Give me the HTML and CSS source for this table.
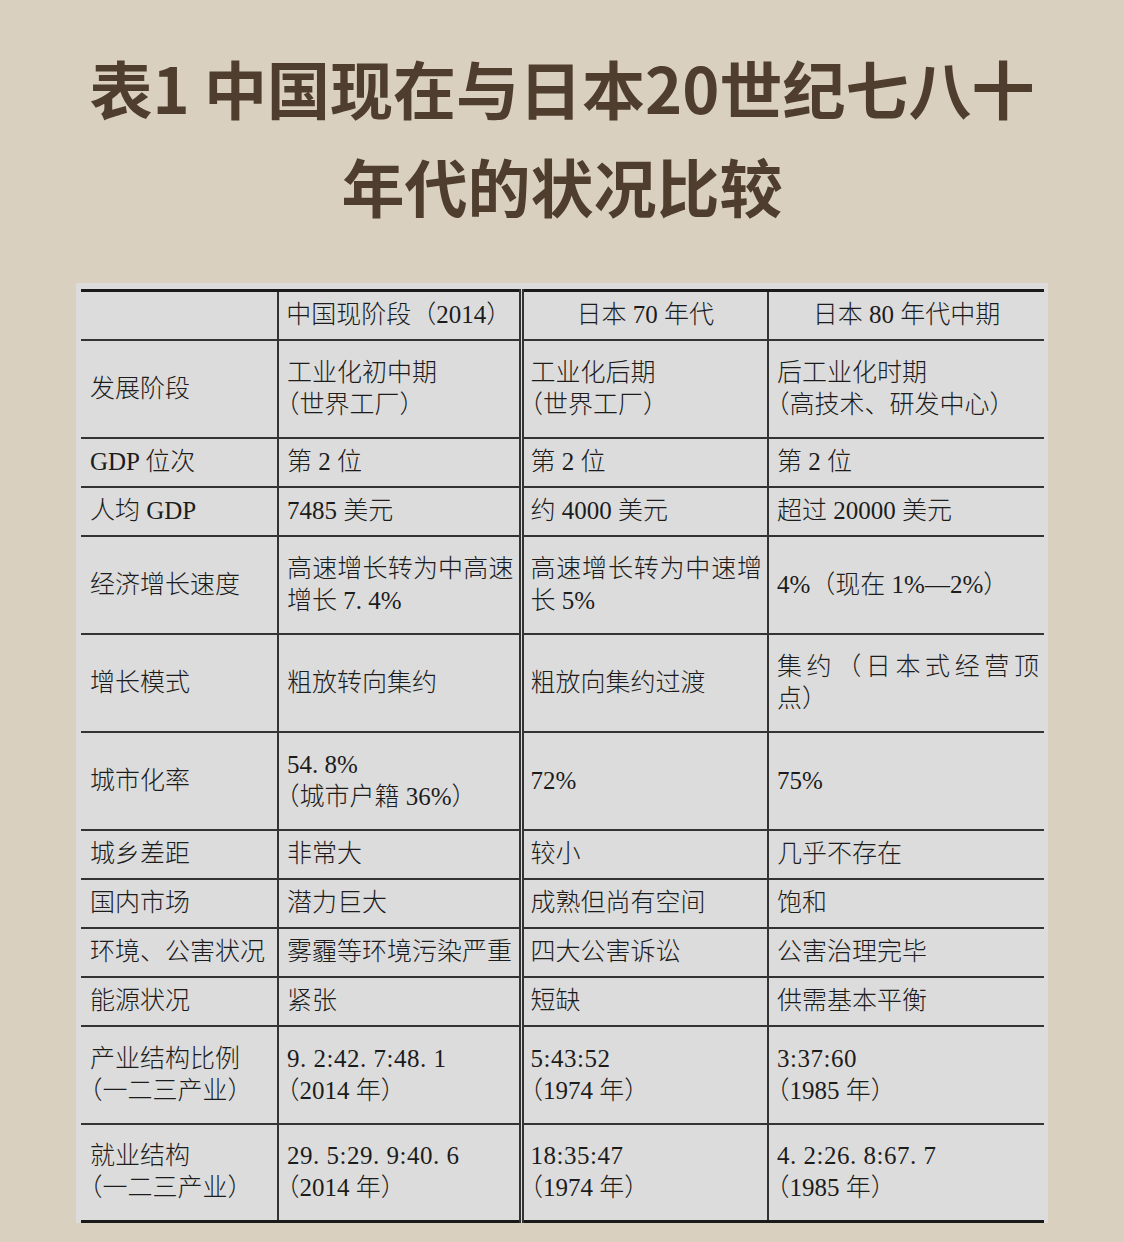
FILE: index.html
```html
<!DOCTYPE html>
<html lang="zh-CN">
<head>
<meta charset="utf-8">
<title>表1 中国现在与日本20世纪七八十年代的状况比较</title>
<link rel="stylesheet" href="styles.css">
</head>
<body>
<h1 class="title">表1 中国现在与日本20世纪七八十<br>年代的状况比较</h1>
<div class="panel">
<table class="cmp">
<colgroup>
<col class="c1"><col class="c2"><col class="c3"><col class="c4">
</colgroup>
<thead>
<tr class="r1">
<th></th>
<th>中国现阶段（2014）</th>
<th class="dbl">日本 70 年代</th>
<th>日本 80 年代中期</th>
</tr>
</thead>
<tbody>
<tr class="r2">
<td>发展阶段</td>
<td>工业化初中期<br><span class="h">（世界工厂）</span></td>
<td class="dbl">工业化后期<br><span class="h">（世界工厂）</span></td>
<td>后工业化时期<br><span class="h">（</span>高技术、研发中心<span class="h">）</span></td>
</tr>
<tr class="r1">
<td>GDP 位次</td>
<td>第 2 位</td>
<td class="dbl">第 2 位</td>
<td>第 2 位</td>
</tr>
<tr class="r1">
<td>人均 GDP</td>
<td>7485 美元</td>
<td class="dbl">约 4000 美元</td>
<td>超过 20000 美元</td>
</tr>
<tr class="r2">
<td>经济增长速度</td>
<td>高速增长转为中高速增长 7. 4%</td>
<td class="dbl">高速增长转为中速增长 5%</td>
<td>4%（现在 1%—2%）</td>
</tr>
<tr class="r2">
<td>增长模式</td>
<td>粗放转向集约</td>
<td class="dbl">粗放向集约过渡</td>
<td>集约（日本式经营顶点）</td>
</tr>
<tr class="r2">
<td>城市化率</td>
<td>54. 8%<br><span class="h">（城市户籍 36%）</span></td>
<td class="dbl">72%</td>
<td>75%</td>
</tr>
<tr class="r1">
<td>城乡差距</td>
<td>非常大</td>
<td class="dbl">较小</td>
<td>几乎不存在</td>
</tr>
<tr class="r1">
<td>国内市场</td>
<td>潜力巨大</td>
<td class="dbl">成熟但尚有空间</td>
<td>饱和</td>
</tr>
<tr class="r1">
<td>环境、公害状况</td>
<td>雾霾等环境污染严重</td>
<td class="dbl">四大公害诉讼</td>
<td>公害治理完毕</td>
</tr>
<tr class="r1">
<td>能源状况</td>
<td>紧张</td>
<td class="dbl">短缺</td>
<td>供需基本平衡</td>
</tr>
<tr class="r2">
<td>产业结构比例<br><span class="h">（一二三产业）</span></td>
<td><span class="r">9. 2:42. 7:48. 1</span><br><span class="h">（2014 年）</span></td>
<td class="dbl"><span class="r">5:43:52</span><br><span class="h">（1974 年）</span></td>
<td><span class="r">3:37:60</span><br><span class="h">（1985 年）</span></td>
</tr>
<tr class="r2 last">
<td>就业结构<br><span class="h">（一二三产业）</span></td>
<td><span class="r">29. 5:29. 9:40. 6</span><br><span class="h">（2014 年）</span></td>
<td class="dbl"><span class="r">18:35:47</span><br><span class="h">（1974 年）</span></td>
<td><span class="r">4. 2:26. 8:67. 7</span><br><span class="h">（1985 年）</span></td>
</tr>
</tbody>
</table>
</div>
</body>
</html>
```
FILE: styles.css
```css
html, body {
  margin: 0;
  padding: 0;
}
body {
  background: #d9d0bf;
  width: 1124px;
  min-height: 1242px;
}
.title {
  margin: 0;
  padding-top: 38px;
  font-family: "Noto Sans CJK SC", "Noto Sans", sans-serif;
  font-weight: 700;
  font-size: 63px;
  line-height: 98px;
  color: #4f3e2d;
  text-align: center;
}
.panel {
  width: 967px;
  margin: 49px auto 0;
  padding: 6px 0 0 5px;
  background: #dcdcdc;
}
.cmp {
  width: 963px;
  table-layout: fixed;
  border-collapse: collapse;
  font-family: "Liberation Serif", "Noto Sans CJK SC", serif;
  font-weight: 300;
  font-size: 25px;
  line-height: 32px;
  color: #1c1c1c;
}
.c1 { width: 197px; }
.c2 { width: 243px; }
.c3 { width: 247px; }
.c4 { width: 276px; }
.cmp th,
.cmp td {
  border-top: 2px solid #333;
  border-left: 2px solid #333;
  padding: 0 5px 0 8px;
  vertical-align: middle;
  text-align: justify;
  font-weight: 300;
  overflow: hidden;
}
.cmp th {
  text-align: center;
  padding: 0 4px;
  border-top: 3px solid #1a1a1a;
}
.cmp tr > :first-child {
  border-left: none;
  padding-left: 9px;
}
.cmp .dbl {
  border-left: 5px double #333;
  padding-left: 7px;
}
.cmp th.dbl {
  padding-left: 4px;
}
.h {
  font-feature-settings: "halt" 1;
}
.r {
  letter-spacing: 0.5px;
}
.r1 { height: 49px; }
.r2 { height: 98px; }
.cmp tr.last td {
  border-bottom: 3px solid #1a1a1a;
}
```
